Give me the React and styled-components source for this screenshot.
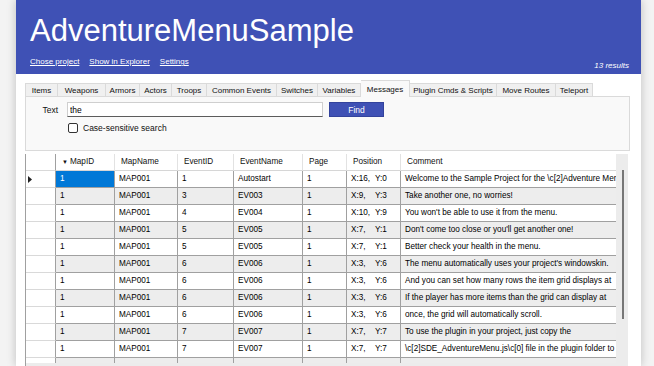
import React from "react";
import styled, { createGlobalStyle } from "styled-components";

const GlobalStyle = createGlobalStyle`
  html, body {
    margin: 0;
    padding: 0;
  }
  body {
    background: #f3f3f3;
    font-family: "Liberation Sans", Arial, sans-serif;
    overflow: hidden;
  }
`;

const Page = styled.div`
  display: flex;
  height: 366px;
  padding: 0 13px 0 16px;
  box-sizing: border-box;
  overflow: hidden;
`;

const Window = styled.div`
  width: 625px;
  background: #ffffff;
  display: flex;
  flex-direction: column;
  box-shadow: 0 0 9px rgba(0, 0, 0, 0.22);
  overflow: hidden;
`;

const Header = styled.header`
  height: 74px;
  flex-shrink: 0;
  box-sizing: border-box;
  padding: 13px 12px 0 14px;
  background: #3f51b5;
  color: #ffffff;
`;

const Title = styled.h1`
  margin: 0;
  font-size: 31px;
  line-height: 36px;
  font-weight: normal;
`;

const LinkBar = styled.div`
  display: flex;
  justify-content: space-between;
  margin-top: 8px;
  font-size: 8px;
  line-height: 10px;
`;

const Links = styled.div`
  display: flex;
  gap: 10px;
`;

const Link = styled.a`
  color: #ffffff;
  text-decoration: underline;
  cursor: pointer;
`;

const Results = styled.span`
  font-style: italic;
  padding-top: 4px;
`;

const Body = styled.div`
  display: flex;
  flex-direction: column;
  padding: 6px 11px 0 9px;
`;

const TabStrip = styled.div`
  display: flex;
  align-items: flex-end;
  height: 16px;
`;

const Tab = styled.div`
  width: ${(p) => p.w}px;
  height: ${(p) => (p.active ? 17 : 13)}px;
  margin-bottom: ${(p) => (p.active ? -1 : 0)}px;
  box-sizing: border-box;
  display: flex;
  align-items: center;
  justify-content: center;
  border: 1px solid #dadada;
  border-left: none;
  border-bottom: none;
  background: ${(p) => (p.active ? "#f9f9f9" : "#f0f0f0")};
  font-size: 8px;
  color: #111;
  white-space: nowrap;
  position: relative;
  z-index: ${(p) => (p.active ? 1 : 0)};

  &:first-child {
    border-left: 1px solid #dadada;
  }
`;

const Panel = styled.div`
  height: 55px;
  box-sizing: border-box;
  border: 1px solid #dadada;
  background: #f9f9f9;
  padding-top: 5px;
`;

const SearchRow = styled.div`
  display: flex;
  align-items: center;
  height: 15px;
`;

const FieldLabel = styled.label`
  width: 41px;
  box-sizing: border-box;
  padding-right: 9px;
  text-align: right;
  font-size: 8.5px;
  color: #111;
`;

const TextInput = styled.input`
  width: 256px;
  height: 15px;
  box-sizing: border-box;
  border: 1px solid #cfcfcf;
  border-bottom-color: #5c5c5c;
  background: #ffffff;
  padding: 0 2px;
  font-family: inherit;
  font-size: 8.5px;
  color: #000;
  outline: none;
`;

const FindButton = styled.button`
  margin-left: 6px;
  width: 55px;
  height: 15px;
  padding: 0;
  box-sizing: border-box;
  border: 1px solid #33439c;
  background: #3f51b5;
  color: #ffffff;
  font-family: inherit;
  font-size: 8.5px;
`;

const CheckRow = styled.div`
  display: flex;
  align-items: center;
  gap: 5px;
  margin: 6px 0 0 42px;
  font-size: 8.5px;
  color: #111;
`;

const CheckBox = styled.span`
  width: 10px;
  height: 10px;
  box-sizing: border-box;
  border: 1px solid #333333;
  border-radius: 2px;
  background: #ffffff;
`;

const Grid = styled.div`
  display: flex;
  margin-top: 3px;
  height: 221px;
  border-left: 1px solid #a0a0a0;
`;

const Table = styled.div`
  width: 590px;
  display: flex;
  flex-direction: column;
  background: #ececec;
  overflow: hidden;
`;

const Rows = styled.div`
  height: 209px;
  flex-shrink: 0;
  overflow: hidden;
  background: #ffffff;
`;

const Row = styled.div`
  display: grid;
  grid-template-columns: 30px 59px 63px 56px 69px 44px 54px 215px;
  height: 17px;
`;

const Cell = styled.div`
  box-sizing: border-box;
  height: 17px;
  padding-left: 4px;
  border-right: 1px solid #a0a0a0;
  border-bottom: 1px solid #a0a0a0;
  background: ${(p) => (p.selected ? "#0078d7" : p.alt ? "#ededed" : "#ffffff")};
  color: ${(p) => (p.selected ? "#ffffff" : "#000000")};
  font-size: 8.2px;
  line-height: 16px;
  white-space: nowrap;
  overflow: hidden;

  &:last-child {
    border-right: none;
  }
`;

const HeadCell = styled(Cell)`
  padding-left: 6px;
  border-right-color: #e2e2e2;
  border-bottom-color: #d6d6d6;
  background: #ffffff;
  color: #111;
`;

const RowHead = styled.div`
  box-sizing: border-box;
  height: 17px;
  display: flex;
  align-items: center;
  padding-left: 2px;
  background: #ffffff;
  border-right: 1px solid #a0a0a0;
  border-bottom: 1px solid #d9d9d9;
`;

const XPart = styled.span`
  display: inline-block;
  width: 24px;
`;

const SortMark = styled.span`
  font-size: 6px;
  margin-right: 2px;
`;

const HScroll = styled.div`
  height: 12px;
  background: #ececec;
`;

const Scrollbar = styled.div`
  width: 12px;
  flex-shrink: 0;
  box-sizing: border-box;
  padding-top: 16px;
  background: #ececec;
`;

const Thumb = styled.div`
  width: 2px;
  height: 149px;
  margin-left: 6px;
  background: #777777;
`;

const tabs = [
  ["Items", 33],
  ["Weapons", 48],
  ["Armors", 34],
  ["Actors", 32],
  ["Troops", 35],
  ["Common Events", 70],
  ["Switches", 41],
  ["Variables", 43],
  ["Messages", 49],
  ["Plugin Cmds & Scripts", 87],
  ["Move Routes", 59],
  ["Teleport", 37],
];

const columns = ["MapID", "MapName", "EventID", "EventName", "Page", "Position", "Comment"];

const rows = [
  ["1", "MAP001", "1", "Autostart", "1", "16", "0", "Welcome to the Sample Project for the \\c[2]Adventure Menu\\c[0] plugin!"],
  ["1", "MAP001", "3", "EV003", "1", "9", "3", "Take another one, no worries!"],
  ["1", "MAP001", "4", "EV004", "1", "10", "9", "You won't be able to use it from the menu."],
  ["1", "MAP001", "5", "EV005", "1", "7", "1", "Don't come too close or you'll get another one!"],
  ["1", "MAP001", "5", "EV005", "1", "7", "1", "Better check your health in the menu."],
  ["1", "MAP001", "6", "EV006", "1", "3", "6", "The menu automatically uses your project's windowskin."],
  ["1", "MAP001", "6", "EV006", "1", "3", "6", "And you can set how many rows the item grid displays at"],
  ["1", "MAP001", "6", "EV006", "1", "3", "6", "If the player has more items than the grid can display at"],
  ["1", "MAP001", "6", "EV006", "1", "3", "6", "once, the grid will automatically scroll."],
  ["1", "MAP001", "7", "EV007", "1", "7", "7", "To use the plugin in your project, just copy the"],
  ["1", "MAP001", "7", "EV007", "1", "7", "7", "\\c[2]SDE_AdventureMenu.js\\c[0] file in the plugin folder to your project."],
];

function Arrow() {
  return (
    <svg width="5" height="7" viewBox="0 0 5 7">
      <polygon points="0,0 4,3.5 0,7" fill="#222" />
    </svg>
  );
}

export default function App() {
  return (
    <>
      <GlobalStyle />
      <Page>
        <Window>
          <Header>
            <Title>AdventureMenuSample</Title>
            <LinkBar>
              <Links>
                <Link>Chose project</Link>
                <Link>Show in Explorer</Link>
                <Link>Settings</Link>
              </Links>
              <Results>13 results</Results>
            </LinkBar>
          </Header>

          <Body>
            <TabStrip>
              {tabs.map(([name, w]) => (
                <Tab key={name} w={w} active={name === "Messages"}>
                  {name}
                </Tab>
              ))}
            </TabStrip>
            <Panel>
              <SearchRow>
                <FieldLabel>Text</FieldLabel>
                <TextInput defaultValue="the" readOnly />
                <FindButton>Find</FindButton>
              </SearchRow>
              <CheckRow>
                <CheckBox />
                <span>Case-sensitive search</span>
              </CheckRow>
            </Panel>

            <Grid>
              <Table>
                <Rows>
                  <Row>
                    <RowHead />
                    {columns.map((c, i) => (
                      <HeadCell key={c}>
                        {i === 0 && <SortMark>▼</SortMark>}
                        {c}
                      </HeadCell>
                    ))}
                  </Row>
                  {rows.map((r, i) => (
                    <Row key={i}>
                      <RowHead>{i === 0 && <Arrow />}</RowHead>
                      <Cell alt={i % 2 === 1} selected={i === 0}>{r[0]}</Cell>
                      <Cell alt={i % 2 === 1}>{r[1]}</Cell>
                      <Cell alt={i % 2 === 1}>{r[2]}</Cell>
                      <Cell alt={i % 2 === 1}>{r[3]}</Cell>
                      <Cell alt={i % 2 === 1}>{r[4]}</Cell>
                      <Cell alt={i % 2 === 1}>
                        <XPart>X:{r[5]},</XPart>Y:{r[6]}
                      </Cell>
                      <Cell alt={i % 2 === 1}>{r[7]}</Cell>
                    </Row>
                  ))}
                  <Row>
                    <RowHead />
                    {columns.map((c) => (
                      <Cell key={c} alt />
                    ))}
                  </Row>
                </Rows>
                <HScroll />
              </Table>
              <Scrollbar>
                <Thumb />
              </Scrollbar>
            </Grid>
          </Body>
        </Window>
      </Page>
    </>
  );
}
